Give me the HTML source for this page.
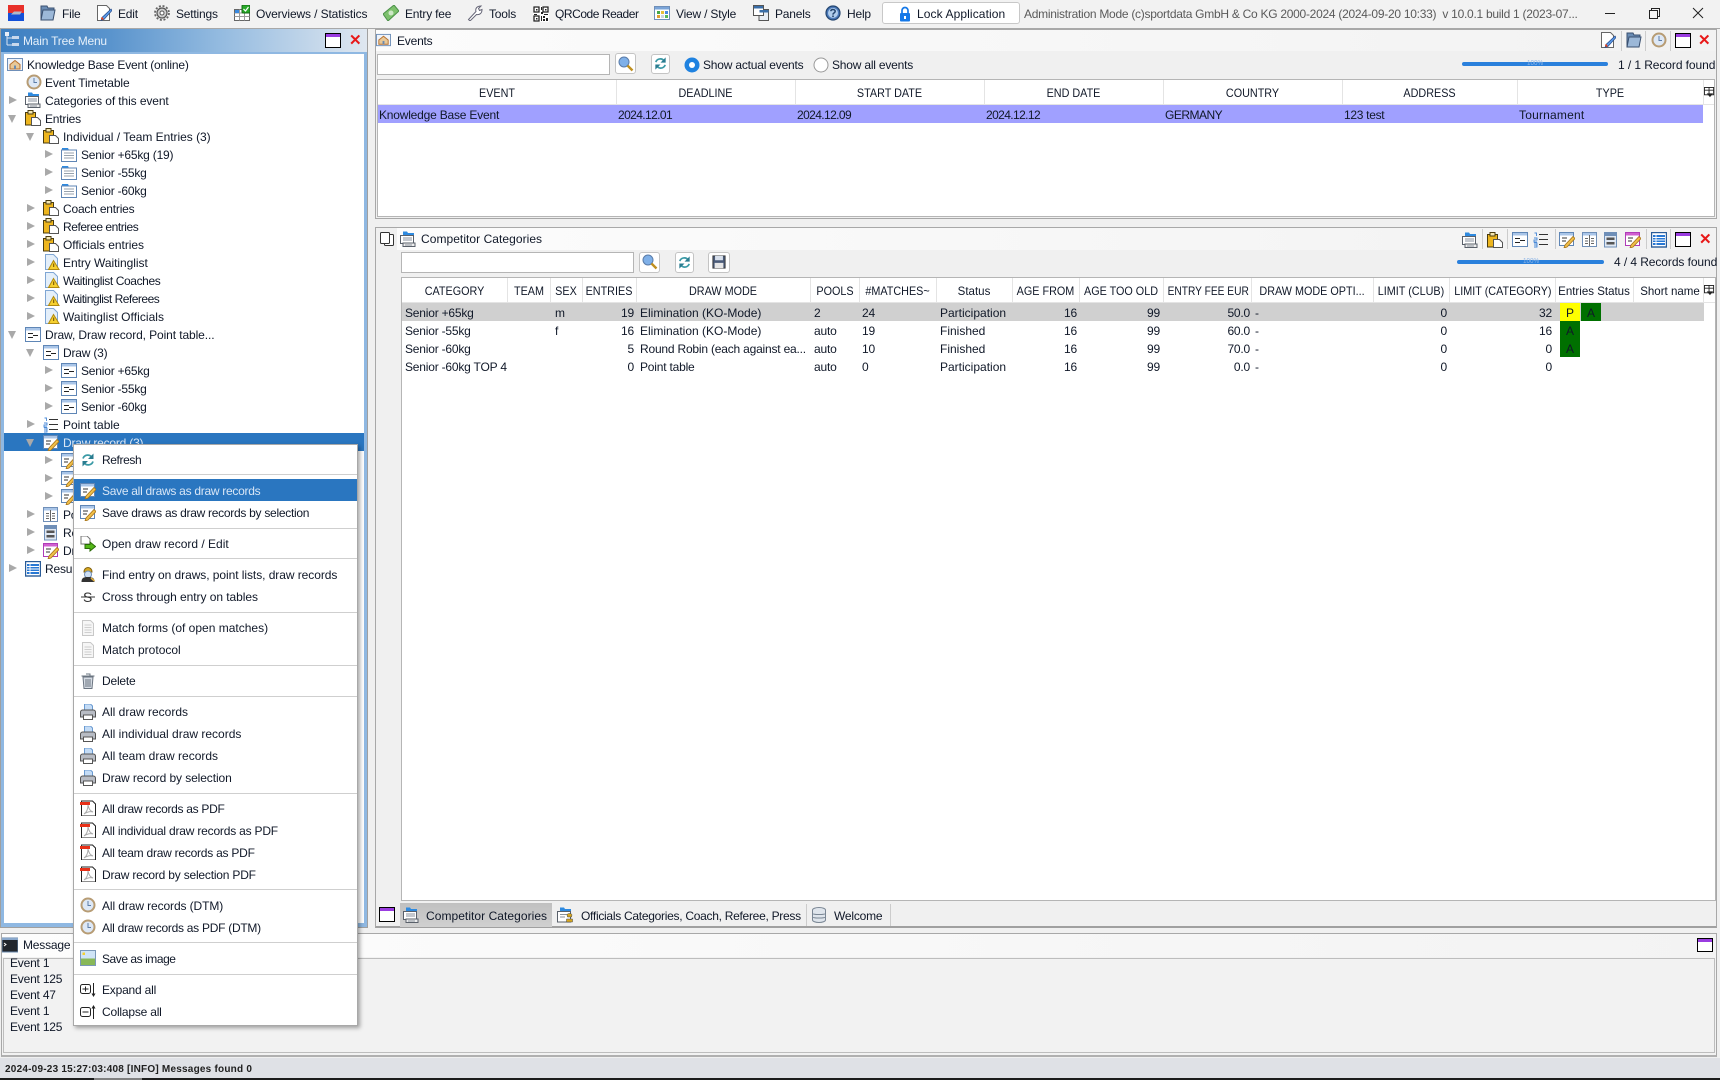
<!DOCTYPE html>
<html><head><meta charset="utf-8"><title>sportdata</title>
<style>
html,body{margin:0;padding:0}
body{width:1720px;height:1080px;overflow:hidden;position:relative;background:#f0f0f0;font:12px/18px "Liberation Sans",Arial,sans-serif;color:#101828;letter-spacing:-.2px}
.b,.t,svg.i{position:absolute}
.t{white-space:nowrap;height:18px}
.c{text-align:center;letter-spacing:0;transform:scaleX(.9)}.r{text-align:right}
.m{transform:scaleX(.96)}
.n{letter-spacing:-.6px}
.k{letter-spacing:0}
svg.i{width:16px;height:16px;overflow:visible}
.ar,.ad{position:absolute;width:0;height:0}
.ar{border-left:8px solid #a9a9a9;border-top:4.5px solid transparent;border-bottom:4.5px solid transparent}
.ad{border-top:8px solid #a9a9a9;border-left:4.5px solid transparent;border-right:4.5px solid transparent}
.sp{position:absolute;left:74px;width:283px;height:1px;background:#cfcfcf}
.hd{position:absolute;width:1px;background:#e4e4e4}
.btn{position:absolute;background:#fff;border:1px solid #c4c4c4;border-radius:3px;box-sizing:border-box}
.inp{position:absolute;background:#fff;border:1px solid #b5b5b5;box-sizing:border-box}
.w{position:absolute;box-sizing:border-box;width:16px;height:15px;border:1.5px solid #000;background:#fff}
.w:before{content:"";position:absolute;left:0;right:0;top:0;height:2.5px;background:#9a3ce0}
.x{position:absolute;color:#e81818;font:bold 15px/15px "Liberation Sans",sans-serif;letter-spacing:0}
</style></head><body>
<svg width="0" height="0" style="position:absolute"><defs>
<symbol id="home" viewBox="0 0 16 16"><rect x=".5" y="1.500" width="15" height="12" fill="#eef3fa" stroke="#6f8fb8"/><path d="M3 7.500L8 3.500L13 7.500V12H3z" fill="#e8c898" stroke="#b9712e"/><rect x="7" y="8.500" width="2" height="3.500" fill="#6a8ab0"/></symbol>
<symbol id="clock" viewBox="0 0 16 16"><circle cx="8" cy="8" r="6.500" fill="#dde8f6" stroke="#b79c74" stroke-width="2"/><path d="M8 4v4.500h3" fill="none" stroke="#5a7ca8"/></symbol>
<symbol id="cat" viewBox="0 0 16 16"><path d="M3 .5h4l1 1.500h6v3H3z" fill="#2e8ae0"/><rect x=".5" y="4.500" width="13" height="8" fill="#fff" stroke="#59606a"/><rect x="3" y="12" width="12" height="3.500" fill="#eee" stroke="#59606a"/><path d="M3 7h9M3 9h9M5 14h7" stroke="#8a929c"/></symbol>
<symbol id="clip" viewBox="0 0 16 16"><rect x=".5" y="2.500" width="10" height="12.500" fill="#eeb61e" stroke="#4a3c10"/><rect x="3" y=".5" width="5" height="3.500" fill="#f4e6b0" stroke="#4a3c10"/><path d="M6.500 7.500h6l3 3v5h-9z" fill="#fff" stroke="#555"/></symbol>
<symbol id="list" viewBox="0 0 16 16"><path d="M1 1h6l1 2H1z" fill="#2e8ae0"/><rect x=".5" y="3" width="15" height="11.500" fill="#fff" stroke="#5f86b6"/><path d="M3 6h10M3 8.500h10M3 11h10" stroke="#97a2ad"/></symbol>
<symbol id="wait" viewBox="0 0 16 16"><path d="M1.500.5h8l4 4v11h-12z" fill="#e4effa" stroke="#7fa6d4"/><path d="M9.500 6.500l5.500 9H4.500z" fill="#f6d030" stroke="#b08a10"/><path d="M9.700 9.500v3.500" stroke="#6a4a00"/></symbol>
<symbol id="draw" viewBox="0 0 16 16"><rect x=".5" y=".5" width="15" height="14" fill="#fff" stroke="#5f86b6"/><rect x="1" y="1" width="14" height="2.500" fill="#a9c5e8"/><path d="M3 6.500h5M3 10.500h5M8 8.500h5" stroke="#222" fill="none"/></symbol>
<symbol id="num" viewBox="0 0 16 16"><path d="M6 2.500h9M6 7.500h9M6 12.500h9" stroke="#333"/><path d="M1.500 1h2v3M1 6h3v2H1v2h3M1 11h3v2H1m3 0v2H1" stroke="#4a8ad8" fill="none" stroke-width=".9"/></symbol>
<symbol id="rec" viewBox="0 0 16 16"><rect x=".5" y=".5" width="14" height="13" fill="#fff" stroke="#5f86b6"/><rect x="1" y="1" width="13" height="2.500" fill="#a9c5e8"/><path d="M3 6h5M3 9h4" stroke="#333"/><path d="M14 4.500l2 2-8 8.500-3 1 1-3z" fill="#f0bf4a" stroke="#a87418" stroke-width=".8"/></symbol>
<symbol id="rec2" viewBox="0 0 16 16"><rect x=".5" y=".5" width="14" height="13" fill="#fff" stroke="#b03cb8"/><rect x="1" y="1" width="13" height="2.500" fill="#d060d0"/><path d="M3 6h5M3 9h4" stroke="#333"/><path d="M14 4.500l2 2-8 8.500-3 1 1-3z" fill="#f0bf4a" stroke="#a87418" stroke-width=".8"/></symbol>
<symbol id="pt" viewBox="0 0 16 16"><rect x=".5" y=".5" width="14" height="14" fill="#fff" stroke="#6f8fb8"/><rect x="1" y="1" width="13" height="2.500" fill="#a9c5e8"/><path d="M7.500 3v11M3 6.500h3M3 9h3M3 11.500h3M9 6.500h3M9 9h3M9 11.500h3" stroke="#666"/></symbol>
<symbol id="res" viewBox="0 0 16 16"><rect x="1.500" y=".5" width="12" height="14.500" fill="#dfe8f4" stroke="#6f8fb8"/><rect x="2" y="1" width="11" height="3" fill="#6f8fb8"/><rect x="3.500" y="5.500" width="8" height="2.500" fill="#555"/><rect x="3.500" y="10" width="8" height="2.500" fill="#555"/></symbol>
<symbol id="tbl" viewBox="0 0 16 16"><rect x=".5" y=".5" width="15" height="14.500" fill="#fff" stroke="#2a5c98" stroke-width="1.400"/><rect x="2" y="3" width="12" height="10" fill="#2878d4"/><path d="M2 5.500h12M2 8h12M2 10.500h12M5 3v10" stroke="#fff" stroke-width=".9"/></symbol>
<symbol id="ref" viewBox="0 0 16 16"><path d="M12 5.500A5 5 0 0 0 3 6.500" fill="none" stroke="#3a9aa6" stroke-width="1.800"/><path d="M13.500 1.500v5.500H8z" fill="#2a7c90"/><path d="M4 10.500A5 5 0 0 0 13 9.500" fill="none" stroke="#3a9aa6" stroke-width="1.800"/><path d="M2.500 14.500V9H8z" fill="#2a7c90"/></symbol>
<symbol id="srch" viewBox="0 0 16 16"><circle cx="6" cy="6" r="5" fill="#7fb0e8" stroke="#5a7ca8"/><path d="M9.500 9.500l5 5" stroke="#c09020" stroke-width="2.400"/></symbol>
<symbol id="save" viewBox="0 0 16 16"><rect x="1" y="1" width="14" height="14" fill="#4a5a78" stroke="#333"/><rect x="3.500" y="1" width="9" height="5" fill="#d8e0ec"/><rect x="3" y="9" width="10" height="6" fill="#e6e6e6"/></symbol>
<symbol id="open" viewBox="0 0 16 16"><path d="M1 0h6l3 3v5H1z" fill="#fff" stroke="#777"/><path d="M5 8.500h5V6l5.500 4.500L10 15v-2.500H5z" fill="#54b818" stroke="#2a6a08"/></symbol>
<symbol id="find" viewBox="0 0 16 16"><path d="M4 5c0-6 8-6 8 0z" fill="#d8a820" stroke="#806010"/><circle cx="8" cy="7.500" r="3.500" fill="#cfe0f4" stroke="#6f8fb8"/><path d="M1.500 15c0-4 2-5 6.500-5s6.500 1 6.500 5z" fill="#333"/><path d="M11 11l3.500 3" stroke="#e0b040" stroke-width="1.500"/></symbol>
<symbol id="cross" viewBox="0 0 16 16"><text x="3" y="13" font-family="Liberation Sans" font-size="14" fill="#333">S</text><path d="M1 8h14" stroke="#333"/></symbol>
<symbol id="doc" viewBox="0 0 16 16"><path d="M2.500.5h8l3 3v12h-11z" fill="#f6f6f6" stroke="#c8c8c8"/><path d="M4.500 5h7M4.500 7.500h7M4.500 10h7M4.500 12.500h7" stroke="#cfcfcf"/></symbol>
<symbol id="trash" viewBox="0 0 16 16"><path d="M3 4h10l-1 11.500H4z" fill="#d6dce4" stroke="#6a7480"/><path d="M1.500 3h13M6 1h4v2M6 6v8M8 6v8M10 6v8" stroke="#6a7480" fill="none"/></symbol>
<symbol id="prn" viewBox="0 0 16 16"><path d="M4.500 0h6l2 2v6h-8z" fill="#c4dcf6" stroke="#6a9ad0"/><path d="M.5 8c0-1 1-2 2-2h11c1 0 2 1 2 2v5h-15z" fill="#b8bcc4" stroke="#555"/><rect x="3.500" y="11" width="9" height="4.500" fill="#fff" stroke="#555"/></symbol>
<symbol id="pdf" viewBox="0 0 16 16"><path d="M1.500 1h11l3 3v12h-14z" fill="#fff" stroke="#222"/><rect x="0" y="2" width="10" height="3" fill="#e83018"/><path d="M4 14c3-2 4-6 4-9 1 4 2 6 5 7-3-1-6 0-9 2z" fill="none" stroke="#aaa"/></symbol>
<symbol id="img" viewBox="0 0 16 16"><rect x=".5" y=".5" width="15" height="15" fill="#cfe4f6" stroke="#7a98b8"/><rect x="1" y="8.500" width="14" height="6.500" fill="#88b858"/><rect x="2.500" y="2.500" width="2.500" height="2.500" fill="#f4d030"/></symbol>
<symbol id="exp" viewBox="0 0 16 16"><rect x=".5" y="2.500" width="10" height="9" rx="2" fill="#fff" stroke="#222"/><path d="M2.500 7h6M5.500 4.500v5" stroke="#222"/><path d="M13.500 1v11" stroke="#222"/><path d="M11.500 11.500h4l-2 3.500z" fill="#222"/></symbol>
<symbol id="col" viewBox="0 0 16 16"><rect x=".5" y="3.500" width="10" height="9" rx="2" fill="#fff" stroke="#222"/><path d="M2.500 8h6" stroke="#222"/><path d="M13.500 4v11" stroke="#222"/><path d="M11.500 4.500h4l-2-3.500z" fill="#222"/></symbol>
<symbol id="off" viewBox="0 0 16 16"><path d="M3 .5h4l1 1.500h6v3H3z" fill="#2e8ae0"/><rect x=".5" y="4.500" width="13" height="10.500" fill="#fff" stroke="#59606a"/><path d="M3 7.500h8M3 10h5" stroke="#8a929c"/><path d="M10 8c0-2 5-2 5 0l-.5 2h-4zM9.500 15v-3h6v3z" fill="#d8a820" stroke="#444" stroke-width=".5"/></symbol>
<symbol id="db" viewBox="0 0 16 16"><ellipse cx="8" cy="3" rx="6.500" ry="2.500" fill="#dfe5ec" stroke="#7a8694"/><path d="M1.500 3v10c0 1.400 3 2.500 6.500 2.500s6.500-1.100 6.500-2.500V3" fill="#dfe5ec" stroke="#7a8694"/><path d="M1.500 6.500c0 1.400 13 1.400 13 0M1.500 10c0 1.400 13 1.400 13 0" fill="none" stroke="#7a8694"/></symbol>
<symbol id="edit" viewBox="0 0 16 16"><path d="M1.500.5h9l3 3v12h-12z" fill="#fff" stroke="#666"/><path d="M15 4l1 1.500-8 9-3 1 1-3z" fill="#5a9ae8" stroke="#264a8a" stroke-width=".7"/><path d="M5 13l1-1 2 2-2 1z" fill="#e84018"/></symbol>
<symbol id="gear" viewBox="0 0 16 16"><circle cx="8" cy="8" r="5" fill="#cfcfcf" stroke="#555" stroke-width="1.200"/><circle cx="8" cy="8" r="2" fill="#fff" stroke="#555"/><circle cx="8" cy="8" r="7" fill="none" stroke="#666" stroke-width="1.800" stroke-dasharray="2 1.700"/></symbol>
<symbol id="file" viewBox="0 0 16 16"><path d="M1 1h6l1 2h6l-1 12H1z" fill="#6a8cb4" stroke="#3a5070"/><path d="M3 5h12l-2 10H1z" fill="#9cb8d8" stroke="#3a5070"/></symbol>
<symbol id="ov" viewBox="0 0 16 16"><rect x=".5" y="4.500" width="15" height="11" fill="#fff" stroke="#666"/><path d="M.5 8h15M.5 11.500h15M5.500 4.500v11M10.500 4.500v11" stroke="#999"/><rect x="1" y="5" width="4" height="3" fill="#3a8ae0"/><rect x="8" y="0" width="8" height="8" rx="1" fill="#28a828" stroke="#156a15"/><path d="M9.500 4l2 2 3-4" stroke="#fff" fill="none" stroke-width="1.200"/></symbol>
<symbol id="fee" viewBox="0 0 16 16"><path d="M0 9L11 0l5 6-11 10z" fill="#7cc06c" stroke="#4a9048"/><circle cx="8" cy="8" r="2.500" fill="#cfe8c8"/></symbol>
<symbol id="tool" viewBox="0 0 16 16"><path d="M1.500 14.500L9 6.500c-1-3 1-5.500 5-5.500l-2.500 2.500 1 2L15 4.500c0 4-2.500 5.500-5.500 5L3 16z" fill="#fff" stroke="#667"/></symbol>
<symbol id="qr" viewBox="0 0 16 16"><rect width="16" height="16" fill="#fff"/><path d="M1 1h5v5H1zM10 1h5v5h-5zM1 10h5v5H1z" fill="none" stroke="#222" stroke-width="1.300"/><path d="M3 3h1.500v1.500H3zM12 3h1.500v1.500H12zM3 12h1.500v1.500H3zM8 1h1v3H8zM8 6h2v2H8zM1 8h3v1H1zM11 8h4v1h-4zM10 10h2v2h-2zM13 12h2v3h-2zM8 10h1v5H8zM10 13h2v2h-2z" fill="#222"/></symbol>
<symbol id="view" viewBox="0 0 16 16"><rect x=".5" y="1.500" width="15" height="13" fill="#fff" stroke="#6f8fb8"/><rect x="1" y="2" width="14" height="2.500" fill="#7aa4d8"/><rect x="3" y="6" width="3" height="3" fill="#48a848"/><rect x="7" y="6" width="3" height="3" fill="#e8c038"/><rect x="11" y="6" width="3" height="3" fill="#4a8ae0"/><rect x="3" y="10" width="3" height="3" fill="#e0a030"/><rect x="7" y="10" width="3" height="3" fill="#d0d8e0"/><rect x="11" y="10" width="3" height="3" fill="#58b858"/></symbol>
<symbol id="pan" viewBox="0 0 16 16"><rect x="6" y="4.500" width="9.500" height="11" fill="#e8edf4" stroke="#555"/><rect x=".5" y=".5" width="10" height="10" fill="#fff" stroke="#555"/><rect x="1" y="1" width="9" height="2.500" fill="#3a6ea8"/><rect x="6.500" y="5" width="9" height="2.500" fill="#3a6ea8"/></symbol>
<symbol id="help" viewBox="0 0 16 16"><circle cx="8" cy="8" r="7" fill="#4a78b8" stroke="#23456f" stroke-width="1.200"/><circle cx="8" cy="8" r="5" fill="#b0cdec"/><path d="M5.800 6.200C6 4 10.200 4 10.200 6.300c0 1.700-2.200 1.500-2.200 3.300" fill="none" stroke="#23456f" stroke-width="1.500"/><rect x="7.200" y="10.500" width="1.600" height="1.600" fill="#23456f"/></symbol>
<symbol id="lock" viewBox="0 0 12 16"><path d="M3 7V4.500a3 3 0 0 1 6 0V7" fill="none" stroke="#1478e8" stroke-width="1.700"/><rect x="1" y="7" width="10" height="8.500" rx="1" fill="#1478e8"/><rect x="5" y="10" width="2" height="3" fill="#fff"/></symbol>
<symbol id="tree" viewBox="0 0 16 16"><path d="M3 2v11M3 6h5M3 13h5" stroke="#d8e4f4" fill="none"/><rect x="1" y="0" width="4" height="4" fill="#e8eef8"/><rect x="8" y="4" width="7" height="3" fill="#c8d8ec"/><rect x="8" y="11" width="7" height="3" fill="#c8d8ec"/></symbol>
<symbol id="cons" viewBox="0 0 16 16"><rect width="16" height="14" y="1" fill="#22262c" stroke="#6a8ab0"/><rect x="0" y="1" width="16" height="2" fill="#8aa8cc"/><path d="M2 6l2 1.500L2 9" stroke="#fff" fill="none"/></symbol>
<symbol id="logo" viewBox="0 0 16 16"><rect width="16" height="8" fill="#e8302a"/><rect y="8" width="16" height="8" fill="#1450d8"/><path d="M3 9.500h9l2-3H6z" fill="#b0b8c8"/></symbol>
<symbol id="stack" viewBox="0 0 16 16"><rect x="5.500" y="3.500" width="9" height="11" rx="1" fill="#fff" stroke="#333"/><rect x="1.500" y="1.500" width="9" height="11" rx="1" fill="#fff" stroke="#333"/></symbol>
<symbol id="columns" viewBox="0 0 12 12"><rect x=".5" y=".5" width="10" height="8" fill="#fff" stroke="#222"/><path d="M.5 3.500h10M5.500 .5v8" stroke="#222"/><path d="M3 7h7l-3.500 4z" fill="#222"/></symbol>
</defs></svg>

<!-- title bar -->
<div class="b" style="left:0;top:0;width:1720px;height:28px;background:#f2f2f2"></div>
<div class="b" style="left:0;top:28px;width:1720px;height:1px;background:#a8a8a8"></div>
<svg class="i" style="left:8px;top:5px"><use href="#logo"/></svg>
<svg class="i" style="left:40px;top:5px"><use href="#file"/></svg><div class="t" style="left:62px;top:5px">File</div>
<svg class="i" style="left:96px;top:5px"><use href="#edit"/></svg><div class="t" style="left:118px;top:5px">Edit</div>
<svg class="i" style="left:154px;top:5px"><use href="#gear"/></svg><div class="t" style="left:176px;top:5px">Settings</div>
<svg class="i" style="left:234px;top:5px"><use href="#ov"/></svg><div class="t" style="left:256px;top:5px;letter-spacing:-.12px">Overviews / Statistics</div>
<svg class="i" style="left:383px;top:5px"><use href="#fee"/></svg><div class="t" style="left:405px;top:5px">Entry fee</div>
<svg class="i" style="left:467px;top:5px"><use href="#tool"/></svg><div class="t" style="left:489px;top:5px">Tools</div>
<svg class="i" style="left:533px;top:6px"><use href="#qr"/></svg><div class="t" style="left:555px;top:5px;letter-spacing:-.45px">QRCode Reader</div>
<svg class="i" style="left:654px;top:5px"><use href="#view"/></svg><div class="t" style="left:676px;top:5px">View / Style</div>
<svg class="i" style="left:753px;top:5px"><use href="#pan"/></svg><div class="t" style="left:775px;top:5px">Panels</div>
<svg class="i" style="left:825px;top:5px"><use href="#help"/></svg><div class="t" style="left:847px;top:5px">Help</div>
<div class="b" style="left:882px;top:2px;width:138px;height:22px;background:#fff;border:1px solid #c8c8c8;border-radius:3px;box-sizing:border-box"></div>
<svg class="i" style="left:899px;top:6px;width:12px"><use href="#lock"/></svg><div class="t" style="left:917px;top:5px;letter-spacing:.1px">Lock Application</div>
<div class="t" style="left:1024px;top:5px;color:#5a5a5a;width:566px;overflow:hidden;letter-spacing:-.27px">Administration Mode (c)sportdata GmbH &amp; Co KG 2000-2024 (2024-09-20 10:33)&nbsp; v 10.0.1 build 1 (2023-07...</div>
<div class="b" style="left:1605px;top:13px;width:10px;height:1px;background:#222"></div>
<div class="b" style="left:1649px;top:10px;width:7px;height:7px;border:1px solid #222;background:#f2f2f2;box-shadow:2px -2px 0 -1px #f2f2f2,2px -2px 0 0 #222"></div>
<svg class="i" style="left:1693px;top:8px;width:10px;height:10px"><path d="M0 0L10 10M10 0L0 10" stroke="#222"/></svg>

<!-- main tree panel -->
<div class="b" style="left:0;top:29px;width:368px;height:899px;background:#8fb8e2;border-right:1px solid #a0a0a0;border-left:1px solid #a0a0a0;border-bottom:1px solid #a0a0a0;box-sizing:border-box"></div>
<div class="b" style="left:1px;top:29px;width:366px;height:23px;background:linear-gradient(90deg,#3d7fc1 0%,#5a94cd 30%,#94bbe0 60%,#dfe7f0 100%)"></div>
<div class="b" style="left:4px;top:54px;width:360px;height:869px;background:#fff"></div>
<svg class="i" style="left:4px;top:32px"><use href="#tree"/></svg>
<div class="t" style="left:23px;top:32px;color:#e6f0fa">Main Tree Menu</div>
<div class="w" style="left:325px;top:33px"></div><div class="x" style="left:349px;top:33px">✕</div>

<!-- tree rows -->
<div class="b" style="left:4px;top:433px;width:360px;height:18px;background:#2a76c0"></div>
<svg class="i" style="left:7px;top:57px"><use href="#home"/></svg><div class="t" style="left:27px;top:56px">Knowledge Base Event (online)</div>
<svg class="i" style="left:26px;top:74px"><use href="#clock"/></svg><div class="t" style="left:45px;top:74px;letter-spacing:-.1px">Event Timetable</div>
<i class="ar" style="left:9px;top:96px"></i><svg class="i" style="left:25px;top:92px"><use href="#cat"/></svg><div class="t" style="left:45px;top:92px;letter-spacing:-.1px">Categories of this event</div>
<i class="ad" style="left:8px;top:115px"></i><svg class="i" style="left:25px;top:110px"><use href="#clip"/></svg><div class="t" style="left:45px;top:110px">Entries</div>
<i class="ad" style="left:26px;top:133px"></i><svg class="i" style="left:43px;top:128px"><use href="#clip"/></svg><div class="t" style="left:63px;top:128px;letter-spacing:-.03px">Individual / Team Entries (3)</div>
<i class="ar" style="left:45px;top:150px"></i><svg class="i" style="left:61px;top:147px"><use href="#list"/></svg><div class="t" style="left:81px;top:146px">Senior +65kg (19)</div>
<i class="ar" style="left:45px;top:168px"></i><svg class="i" style="left:61px;top:165px"><use href="#list"/></svg><div class="t" style="left:81px;top:164px">Senior -55kg</div>
<i class="ar" style="left:45px;top:186px"></i><svg class="i" style="left:61px;top:183px"><use href="#list"/></svg><div class="t" style="left:81px;top:182px">Senior -60kg</div>
<i class="ar" style="left:27px;top:204px"></i><svg class="i" style="left:43px;top:200px"><use href="#clip"/></svg><div class="t" style="left:63px;top:200px">Coach entries</div>
<i class="ar" style="left:27px;top:222px"></i><svg class="i" style="left:43px;top:218px"><use href="#clip"/></svg><div class="t" style="left:63px;top:218px;letter-spacing:-.45px">Referee entries</div>
<i class="ar" style="left:27px;top:240px"></i><svg class="i" style="left:43px;top:236px"><use href="#clip"/></svg><div class="t" style="left:63px;top:236px;letter-spacing:-.05px">Officials entries</div>
<i class="ar" style="left:27px;top:258px"></i><svg class="i" style="left:44px;top:254px"><use href="#wait"/></svg><div class="t" style="left:63px;top:254px;letter-spacing:-.05px">Entry Waitinglist</div>
<i class="ar" style="left:27px;top:276px"></i><svg class="i" style="left:44px;top:272px"><use href="#wait"/></svg><div class="t" style="left:63px;top:272px;letter-spacing:-.4px">Waitinglist Coaches</div>
<i class="ar" style="left:27px;top:294px"></i><svg class="i" style="left:44px;top:290px"><use href="#wait"/></svg><div class="t" style="left:63px;top:290px;letter-spacing:-.5px">Waitinglist Referees</div>
<i class="ar" style="left:27px;top:312px"></i><svg class="i" style="left:44px;top:308px"><use href="#wait"/></svg><div class="t" style="left:63px;top:308px;letter-spacing:.05px">Waitinglist Officials</div>
<i class="ad" style="left:8px;top:331px"></i><svg class="i" style="left:25px;top:327px"><use href="#draw"/></svg><div class="t" style="left:45px;top:326px;letter-spacing:-.1px">Draw, Draw record, Point table...</div>
<i class="ad" style="left:26px;top:349px"></i><svg class="i" style="left:43px;top:345px"><use href="#draw"/></svg><div class="t" style="left:63px;top:344px">Draw (3)</div>
<i class="ar" style="left:45px;top:366px"></i><svg class="i" style="left:61px;top:363px"><use href="#draw"/></svg><div class="t" style="left:81px;top:362px">Senior +65kg</div>
<i class="ar" style="left:45px;top:384px"></i><svg class="i" style="left:61px;top:381px"><use href="#draw"/></svg><div class="t" style="left:81px;top:380px">Senior -55kg</div>
<i class="ar" style="left:45px;top:402px"></i><svg class="i" style="left:61px;top:399px"><use href="#draw"/></svg><div class="t" style="left:81px;top:398px">Senior -60kg</div>
<i class="ar" style="left:27px;top:420px"></i><svg class="i" style="left:43px;top:417px"><use href="#num"/></svg><div class="t k" style="left:63px;top:416px">Point table</div>
<i class="ad" style="left:26px;top:439px"></i><svg class="i" style="left:43px;top:435px"><use href="#rec"/></svg><div class="t" style="left:63px;top:434px;color:#dbe8f6">Draw record (3)</div>
<i class="ar" style="left:45px;top:456px"></i><svg class="i" style="left:61px;top:453px"><use href="#rec"/></svg>
<i class="ar" style="left:45px;top:474px"></i><svg class="i" style="left:61px;top:471px"><use href="#rec"/></svg>
<i class="ar" style="left:45px;top:492px"></i><svg class="i" style="left:61px;top:489px"><use href="#rec"/></svg>
<i class="ar" style="left:27px;top:510px"></i><svg class="i" style="left:43px;top:507px"><use href="#pt"/></svg><div class="t" style="left:63px;top:506px">Point</div>
<i class="ar" style="left:27px;top:528px"></i><svg class="i" style="left:43px;top:525px"><use href="#res"/></svg><div class="t" style="left:63px;top:524px">Results</div>
<i class="ar" style="left:27px;top:546px"></i><svg class="i" style="left:43px;top:543px"><use href="#rec2"/></svg><div class="t" style="left:63px;top:542px">Draw</div>
<i class="ar" style="left:9px;top:564px"></i><svg class="i" style="left:25px;top:561px"><use href="#tbl"/></svg><div class="t" style="left:45px;top:560px">Results</div>

<!-- events panel -->
<div class="b" style="left:375px;top:29px;width:1342px;height:190px;border:1px solid #a8a8a8;box-sizing:border-box;background:#f0f0f0"></div>
<div class="b" style="left:376px;top:30px;width:1340px;height:21px;background:linear-gradient(90deg,#fcfcfc,#f2f2f2)"></div>
<svg class="i" style="left:376px;top:33px;width:15px;height:15px"><use href="#home"/></svg><div class="t" style="left:397px;top:32px">Events</div>
<svg class="i" style="left:1600px;top:32px"><use href="#edit"/></svg>
<svg class="i" style="left:1626px;top:32px"><use href="#file"/></svg>
<svg class="i" style="left:1651px;top:32px"><use href="#clock"/></svg>
<div class="hd" style="left:1621px;top:31px;height:20px;background:#ccc"></div><div class="hd" style="left:1645px;top:31px;height:20px;background:#ccc"></div><div class="hd" style="left:1670px;top:31px;height:20px;background:#ccc"></div>
<div class="w" style="left:1675px;top:33px"></div><div class="x" style="left:1698px;top:33px">✕</div>
<div class="inp" style="left:377px;top:54px;width:233px;height:21px"></div>
<div class="btn" style="left:615px;top:53px;width:21px;height:21px"></div><svg class="i" style="left:618px;top:56px"><use href="#srch"/></svg>
<div class="btn" style="left:651px;top:54px;width:19px;height:20px"></div><svg class="i" style="left:653px;top:56px;width:15px;height:15px"><use href="#ref"/></svg>
<svg class="i" style="left:684px;top:57px"><circle cx="8" cy="8" r="7.500" fill="#1f82e0"/><circle cx="8" cy="8" r="3" fill="#fff"/></svg><div class="t" style="left:703px;top:56px">Show actual events</div>
<svg class="i" style="left:813px;top:57px"><circle cx="8" cy="8" r="7" fill="#fff" stroke="#999"/></svg><div class="t" style="left:832px;top:56px">Show all events</div>
<div class="b" style="left:1462px;top:62px;width:146px;height:4px;background:#2a80dc;border-radius:2px"></div>
<div class="t c" style="left:1512px;top:59px;width:46px;height:10px;font-size:7px;line-height:10px;color:#8fb6e6">100%</div>
<div class="t" style="left:1618px;top:56px;letter-spacing:-.08px">1 / 1 Record found</div>
<!-- events table -->
<div class="b" style="left:377px;top:79px;width:1338px;height:138px;background:#fff;border:1px solid #b5b5b5;box-sizing:border-box"></div>
<div class="hd" style="left:378px;top:104px;width:1336px;height:1px"></div>
<div class="hd" style="left:616px;top:80px;height:24px"></div><div class="hd" style="left:795px;top:80px;height:24px"></div><div class="hd" style="left:984px;top:80px;height:24px"></div><div class="hd" style="left:1163px;top:80px;height:24px"></div><div class="hd" style="left:1342px;top:80px;height:24px"></div><div class="hd" style="left:1517px;top:80px;height:24px"></div><div class="hd" style="left:1703px;top:80px;height:24px"></div>
<div class="t c" style="left:378px;top:84px;width:238px">EVENT</div>
<div class="t c" style="left:616px;top:84px;width:179px">DEADLINE</div>
<div class="t c" style="left:795px;top:84px;width:189px">START DATE</div>
<div class="t c" style="left:984px;top:84px;width:179px">END DATE</div>
<div class="t c" style="left:1163px;top:84px;width:179px">COUNTRY</div>
<div class="t c" style="left:1342px;top:84px;width:175px">ADDRESS</div>
<div class="t c" style="left:1517px;top:84px;width:186px">TYPE</div>
<svg class="i" style="left:1704px;top:87px;width:11px;height:11px"><use href="#columns"/></svg>
<div class="b" style="left:378px;top:105px;width:1325px;height:18px;background:#a0a0ff"></div>
<div class="t" style="left:379px;top:106px">Knowledge Base Event</div>
<div class="t n" style="left:618px;top:106px">2024.12.01</div>
<div class="t n" style="left:797px;top:106px">2024.12.09</div>
<div class="t n" style="left:986px;top:106px">2024.12.12</div>
<div class="t" style="left:1165px;top:106px;letter-spacing:-.5px">GERMANY</div>
<div class="t" style="left:1344px;top:106px;letter-spacing:-.3px">123 test</div>
<div class="t" style="left:1519px;top:106px;letter-spacing:.2px">Tournament</div>

<!-- categories panel -->
<div class="b" style="left:375px;top:227px;width:1342px;height:701px;border:1px solid #a8a8a8;border-bottom:2px solid #a0a0a0;box-sizing:border-box;background:#f0f0f0"></div>
<div class="b" style="left:397px;top:228px;width:1319px;height:22px;background:linear-gradient(90deg,#fcfcfc,#f2f2f2)"></div>
<svg class="i" style="left:379px;top:231px"><use href="#stack"/></svg>
<svg class="i" style="left:400px;top:231px"><use href="#cat"/></svg><div class="t" style="left:421px;top:230px;letter-spacing:.05px">Competitor Categories</div>
<svg class="i" style="left:1462px;top:232px"><use href="#cat"/></svg>
<svg class="i" style="left:1487px;top:232px"><use href="#clip"/></svg>
<svg class="i" style="left:1512px;top:232px"><use href="#draw"/></svg>
<svg class="i" style="left:1533px;top:232px"><use href="#num"/></svg>
<svg class="i" style="left:1559px;top:232px"><use href="#rec"/></svg>
<svg class="i" style="left:1582px;top:232px"><use href="#pt"/></svg>
<svg class="i" style="left:1603px;top:232px"><use href="#res"/></svg>
<svg class="i" style="left:1625px;top:232px"><use href="#rec2"/></svg>
<svg class="i" style="left:1651px;top:232px"><use href="#tbl"/></svg>
<div class="hd" style="left:1482px;top:229px;height:20px;background:#ccc"></div><div class="hd" style="left:1507px;top:229px;height:20px;background:#ccc"></div><div class="hd" style="left:1555px;top:229px;height:20px;background:#ccc"></div><div class="hd" style="left:1646px;top:229px;height:20px;background:#ccc"></div><div class="hd" style="left:1670px;top:229px;height:20px;background:#ccc"></div>
<div class="w" style="left:1675px;top:232px"></div><div class="x" style="left:1699px;top:232px">✕</div>
<div class="inp" style="left:401px;top:252px;width:233px;height:21px"></div>
<div class="btn" style="left:639px;top:252px;width:21px;height:21px"></div><svg class="i" style="left:642px;top:254px"><use href="#srch"/></svg>
<div class="btn" style="left:675px;top:252px;width:19px;height:21px"></div><svg class="i" style="left:677px;top:255px;width:15px;height:15px"><use href="#ref"/></svg>
<div class="btn" style="left:708px;top:252px;width:22px;height:21px"></div><svg class="i" style="left:712px;top:255px;width:14px;height:14px"><use href="#save"/></svg>
<div class="b" style="left:1457px;top:260px;width:147px;height:4px;background:#2a80dc;border-radius:2px"></div>
<div class="t c" style="left:1508px;top:257px;width:46px;height:10px;font-size:7px;line-height:10px;color:#8fb6e6">100%</div>
<div class="t" style="left:1614px;top:253px;letter-spacing:-.08px">4 / 4 Records found</div>
<!-- categories table -->
<div class="b" style="left:401px;top:277px;width:1315px;height:624px;background:#fff;border:1px solid #b5b5b5;box-sizing:border-box"></div>
<div class="hd" style="left:402px;top:302px;width:1313px;height:1px"></div>
<div class="hd" style="left:507px;top:278px;height:24px"></div><div class="hd" style="left:550px;top:278px;height:24px"></div><div class="hd" style="left:582px;top:278px;height:24px"></div><div class="hd" style="left:636px;top:278px;height:24px"></div><div class="hd" style="left:810px;top:278px;height:24px"></div><div class="hd" style="left:859px;top:278px;height:24px"></div><div class="hd" style="left:936px;top:278px;height:24px"></div><div class="hd" style="left:1012px;top:278px;height:24px"></div><div class="hd" style="left:1079px;top:278px;height:24px"></div><div class="hd" style="left:1163px;top:278px;height:24px"></div><div class="hd" style="left:1251px;top:278px;height:24px"></div><div class="hd" style="left:1373px;top:278px;height:24px"></div><div class="hd" style="left:1449px;top:278px;height:24px"></div><div class="hd" style="left:1555px;top:278px;height:24px"></div><div class="hd" style="left:1633px;top:278px;height:24px"></div><div class="hd" style="left:1703px;top:278px;height:24px"></div>
<div class="t c" style="left:402px;top:282px;width:105px">CATEGORY</div>
<div class="t c" style="left:507px;top:282px;width:44px">TEAM</div>
<div class="t c" style="left:550px;top:282px;width:32px">SEX</div>
<div class="t c" style="left:582px;top:282px;width:54px">ENTRIES</div>
<div class="t c" style="left:636px;top:282px;width:174px">DRAW MODE</div>
<div class="t c" style="left:810px;top:282px;width:50px">POOLS</div>
<div class="t c" style="left:859px;top:282px;width:77px">#MATCHES~</div>
<div class="t c m" style="left:936px;top:282px;width:76px">Status</div>
<div class="t c" style="left:1012px;top:282px;width:67px">AGE FROM</div>
<div class="t c" style="left:1079px;top:282px;width:84px">AGE TOO OLD</div>
<div class="t c" style="left:1161px;top:282px;width:88px;transform:scaleX(.85)">ENTRY FEE EUR</div>
<div class="t c" style="left:1251px;top:282px;width:122px">DRAW MODE OPTI...</div>
<div class="t c" style="left:1373px;top:282px;width:76px">LIMIT (CLUB)</div>
<div class="t c" style="left:1449px;top:282px;width:106px">LIMIT (CATEGORY)</div>
<div class="t c m" style="left:1555px;top:282px;width:78px">Entries Status</div>
<div class="t c m" style="left:1635px;top:282px;width:70px">Short name</div>
<svg class="i" style="left:1704px;top:285px;width:11px;height:11px"><use href="#columns"/></svg>
<div class="b" style="left:402px;top:303px;width:1302px;height:18px;background:#d0d0d0"></div>
<div class="b" style="left:1560px;top:303px;width:20px;height:18px;background:#ffff00"></div>
<div class="b" style="left:1581px;top:303px;width:20px;height:18px;background:#007000"></div>
<div class="b" style="left:1560px;top:321px;width:20px;height:36px;background:#007000"></div>
<div class="t c" style="left:1560px;top:304px;width:20px;transform:none">P</div><div class="t c" style="left:1581px;top:304px;width:20px;transform:none">A</div>
<div class="t c" style="left:1560px;top:322px;width:20px;transform:none">A</div><div class="t c" style="left:1560px;top:340px;width:20px;transform:none">A</div>
<!-- rows -->
<div class="t" style="left:405px;top:304px">Senior +65kg</div><div class="t" style="left:555px;top:304px">m</div><div class="t r" style="left:584px;top:304px;width:50px">19</div><div class="t k" style="left:640px;top:304px">Elimination (KO-Mode)</div><div class="t" style="left:814px;top:304px">2</div><div class="t" style="left:862px;top:304px">24</div><div class="t k" style="left:940px;top:304px">Participation</div><div class="t r" style="left:1027px;top:304px;width:50px">16</div><div class="t r" style="left:1110px;top:304px;width:50px">99</div><div class="t r" style="left:1190px;top:304px;width:60px">50.0</div><div class="t" style="left:1255px;top:304px">-</div><div class="t r" style="left:1397px;top:304px;width:50px">0</div><div class="t r" style="left:1502px;top:304px;width:50px">32</div>
<div class="t" style="left:405px;top:322px">Senior -55kg</div><div class="t" style="left:555px;top:322px">f</div><div class="t r" style="left:584px;top:322px;width:50px">16</div><div class="t k" style="left:640px;top:322px">Elimination (KO-Mode)</div><div class="t" style="left:814px;top:322px">auto</div><div class="t" style="left:862px;top:322px">19</div><div class="t k" style="left:940px;top:322px">Finished</div><div class="t r" style="left:1027px;top:322px;width:50px">16</div><div class="t r" style="left:1110px;top:322px;width:50px">99</div><div class="t r" style="left:1190px;top:322px;width:60px">60.0</div><div class="t" style="left:1255px;top:322px">-</div><div class="t r" style="left:1397px;top:322px;width:50px">0</div><div class="t r" style="left:1502px;top:322px;width:50px">16</div>
<div class="t" style="left:405px;top:340px">Senior -60kg</div><div class="t r" style="left:584px;top:340px;width:50px">5</div><div class="t" style="left:640px;top:340px">Round Robin (each against ea...</div><div class="t" style="left:814px;top:340px">auto</div><div class="t" style="left:862px;top:340px">10</div><div class="t k" style="left:940px;top:340px">Finished</div><div class="t r" style="left:1027px;top:340px;width:50px">16</div><div class="t r" style="left:1110px;top:340px;width:50px">99</div><div class="t r" style="left:1190px;top:340px;width:60px">70.0</div><div class="t" style="left:1255px;top:340px">-</div><div class="t r" style="left:1397px;top:340px;width:50px">0</div><div class="t r" style="left:1502px;top:340px;width:50px">0</div>
<div class="t" style="left:405px;top:358px">Senior -60kg TOP 4</div><div class="t r" style="left:584px;top:358px;width:50px">0</div><div class="t" style="left:640px;top:358px">Point table</div><div class="t" style="left:814px;top:358px">auto</div><div class="t" style="left:862px;top:358px">0</div><div class="t k" style="left:940px;top:358px">Participation</div><div class="t r" style="left:1027px;top:358px;width:50px">16</div><div class="t r" style="left:1110px;top:358px;width:50px">99</div><div class="t r" style="left:1190px;top:358px;width:60px">0.0</div><div class="t" style="left:1255px;top:358px">-</div><div class="t r" style="left:1397px;top:358px;width:50px">0</div><div class="t r" style="left:1502px;top:358px;width:50px">0</div>
<!-- tabs -->
<div class="w" style="left:379px;top:907px"></div>
<div class="b" style="left:400px;top:903px;width:152px;height:24px;background:linear-gradient(#c0c0c0,#d0d0d0)"></div>
<svg class="i" style="left:403px;top:907px"><use href="#cat"/></svg><div class="t" style="left:426px;top:907px;letter-spacing:.05px">Competitor Categories</div>
<svg class="i" style="left:557px;top:907px"><use href="#off"/></svg><div class="t" style="left:581px;top:907px;letter-spacing:-.28px">Officials Categories, Coach, Referee, Press</div>
<div class="hd" style="left:806px;top:904px;height:22px;background:#ccc"></div>
<svg class="i" style="left:811px;top:907px"><use href="#db"/></svg><div class="t" style="left:834px;top:907px">Welcome</div>
<div class="hd" style="left:890px;top:904px;height:22px;background:#ccc"></div>

<!-- message panel -->
<div class="b" style="left:1px;top:933px;width:1716px;height:124px;border:1px solid #a8a8a8;border-bottom:2px solid #b0b0b0;box-sizing:border-box;background:#f2f2f2"></div>
<div class="b" style="left:2px;top:934px;width:1714px;height:23px;background:linear-gradient(90deg,#fdfdfd,#f3f3f3)"></div>
<svg class="i" style="left:2px;top:937px"><use href="#cons"/></svg><div class="t" style="left:23px;top:936px">Message</div>
<div class="w" style="left:1697px;top:938px;height:14px"></div>
<div class="b" style="left:3px;top:958px;width:1712px;height:95px;border:1px solid #bdbdbd;box-sizing:border-box"></div>
<div class="t" style="left:10px;top:954px">Event 1</div>
<div class="t" style="left:10px;top:970px">Event 125</div>
<div class="t" style="left:10px;top:986px">Event 47</div>
<div class="t" style="left:10px;top:1002px">Event 1</div>
<div class="t" style="left:10px;top:1018px">Event 125</div>
<!-- status -->
<div class="b" style="left:0;top:1058px;width:1720px;height:20px;background:#dfe1e6"></div>
<div class="t" style="left:5px;top:1061px;font-size:10px;font-weight:bold;color:#202020;letter-spacing:.22px">2024-09-23 15:27:03:408 [INFO] Messages found 0</div>
<div class="b" style="left:0;top:1078px;width:1720px;height:2px;background:#1c1c1c"></div>
<div class="b" style="left:94px;top:1078px;width:48px;height:2px;background:#808080"></div>

<!-- context menu -->
<div class="b" style="left:73px;top:444px;width:285px;height:582px;background:#fff;border:1px solid #a8a8a8;box-sizing:border-box;box-shadow:2px 2px 4px rgba(0,0,0,.35)"></div>
<div class="b" style="left:74px;top:479px;width:283px;height:22px;background:#2a76c0"></div>
<svg class="i" style="left:80px;top:452px"><use href="#ref"/></svg><div class="t" style="left:102px;top:451px;letter-spacing:-.4px">Refresh</div>
<div class="sp" style="top:474px"></div>
<svg class="i" style="left:80px;top:483px"><use href="#rec"/></svg><div class="t" style="left:102px;top:482px;color:#d8e6f6;letter-spacing:-.28px">Save all draws as draw records</div>
<svg class="i" style="left:80px;top:505px"><use href="#rec"/></svg><div class="t" style="left:102px;top:504px;letter-spacing:-.28px">Save draws as draw records by selection</div>
<div class="sp" style="top:528px"></div>
<svg class="i" style="left:80px;top:536px"><use href="#open"/></svg><div class="t k" style="left:102px;top:535px">Open draw record / Edit</div>
<div class="sp" style="top:558px"></div>
<svg class="i" style="left:80px;top:567px"><use href="#find"/></svg><div class="t" style="left:102px;top:566px;letter-spacing:-.06px">Find entry on draws, point lists, draw records</div>
<svg class="i" style="left:80px;top:589px"><use href="#cross"/></svg><div class="t" style="left:102px;top:588px;letter-spacing:-.05px">Cross through entry on tables</div>
<div class="sp" style="top:612px"></div>
<svg class="i" style="left:80px;top:620px"><use href="#doc"/></svg><div class="t k" style="left:102px;top:619px">Match forms (of open matches)</div>
<svg class="i" style="left:80px;top:642px"><use href="#doc"/></svg><div class="t k" style="left:102px;top:641px">Match protocol</div>
<div class="sp" style="top:665px"></div>
<svg class="i" style="left:80px;top:673px"><use href="#trash"/></svg><div class="t" style="left:102px;top:672px">Delete</div>
<div class="sp" style="top:696px"></div>
<svg class="i" style="left:80px;top:704px"><use href="#prn"/></svg><div class="t k" style="left:102px;top:703px">All draw records</div>
<svg class="i" style="left:80px;top:726px"><use href="#prn"/></svg><div class="t k" style="left:102px;top:725px">All individual draw records</div>
<svg class="i" style="left:80px;top:748px"><use href="#prn"/></svg><div class="t k" style="left:102px;top:747px">All team draw records</div>
<svg class="i" style="left:80px;top:770px"><use href="#prn"/></svg><div class="t" style="left:102px;top:769px;letter-spacing:-.1px">Draw record by selection</div>
<div class="sp" style="top:793px"></div>
<svg class="i" style="left:80px;top:800px"><use href="#pdf"/></svg><div class="t" style="left:102px;top:800px;letter-spacing:-.3px">All draw records as PDF</div>
<svg class="i" style="left:80px;top:822px"><use href="#pdf"/></svg><div class="t" style="left:102px;top:822px;letter-spacing:-.2px">All individual draw records as PDF</div>
<svg class="i" style="left:80px;top:844px"><use href="#pdf"/></svg><div class="t" style="left:102px;top:844px;letter-spacing:-.24px">All team draw records as PDF</div>
<svg class="i" style="left:80px;top:866px"><use href="#pdf"/></svg><div class="t" style="left:102px;top:866px">Draw record by selection PDF</div>
<div class="sp" style="top:889px"></div>
<svg class="i" style="left:80px;top:897px"><use href="#clock"/></svg><div class="t" style="left:102px;top:897px;letter-spacing:-.1px">All draw records (DTM)</div>
<svg class="i" style="left:80px;top:919px"><use href="#clock"/></svg><div class="t" style="left:102px;top:919px;letter-spacing:-.27px">All draw records as PDF (DTM)</div>
<div class="sp" style="top:942px"></div>
<svg class="i" style="left:80px;top:950px"><use href="#img"/></svg><div class="t" style="left:102px;top:950px;letter-spacing:-.45px">Save as image</div>
<div class="sp" style="top:974px"></div>
<svg class="i" style="left:80px;top:982px"><use href="#exp"/></svg><div class="t" style="left:102px;top:981px">Expand all</div>
<svg class="i" style="left:80px;top:1004px"><use href="#col"/></svg><div class="t" style="left:102px;top:1003px">Collapse all</div>
</body></html>
